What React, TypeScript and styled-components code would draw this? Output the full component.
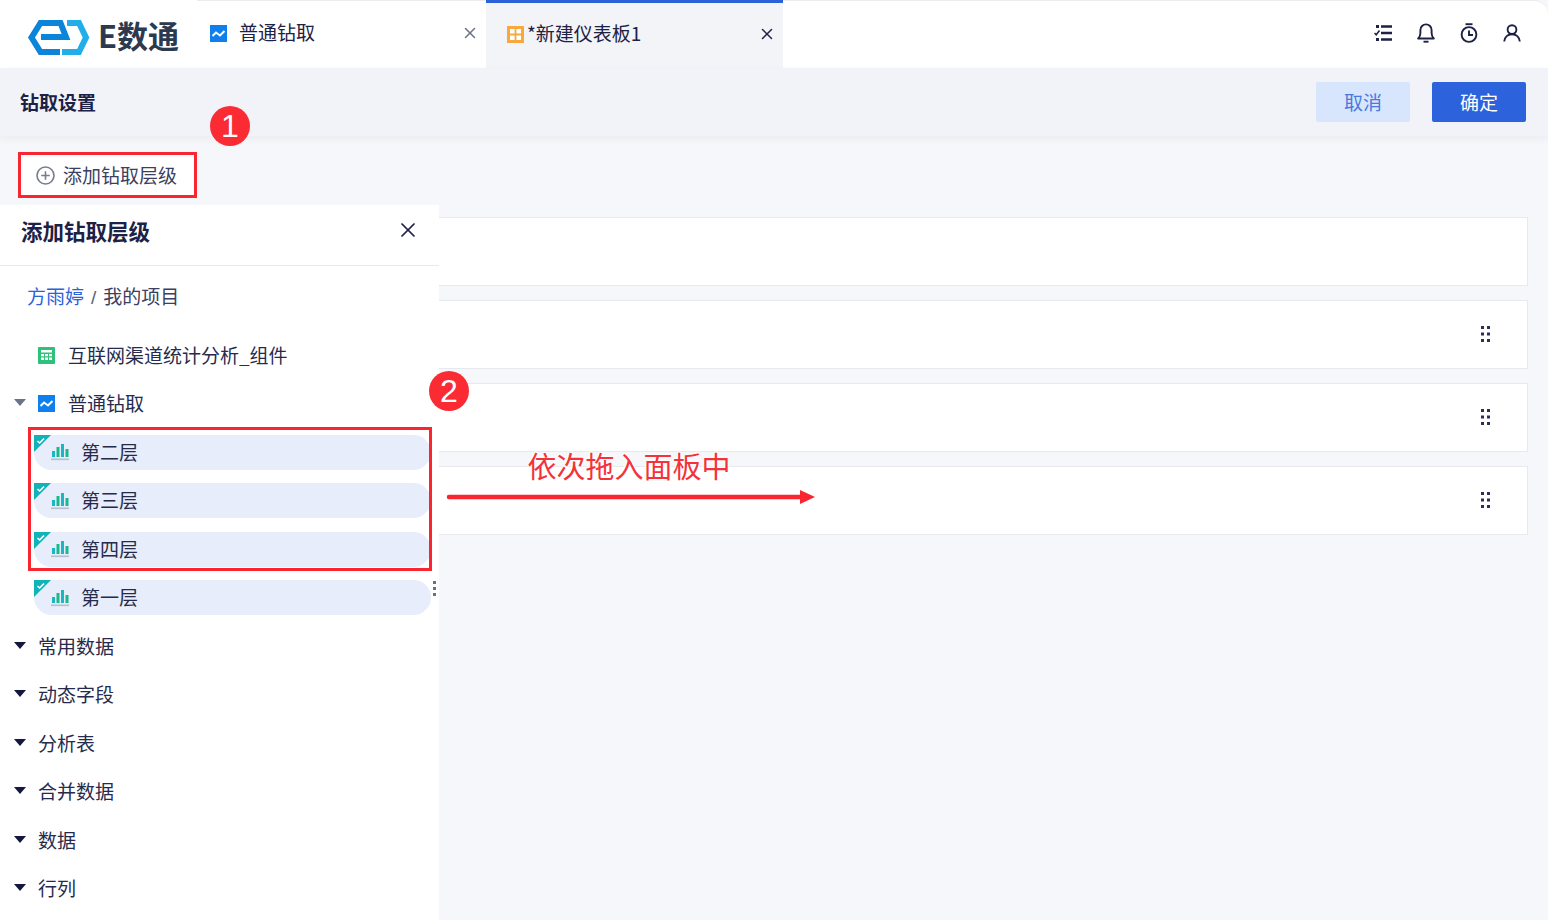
import React from "react";
import styled, { createGlobalStyle } from "styled-components";
import { X } from "lucide-react";

const Global = createGlobalStyle`
  html, body { margin: 0; padding: 0; background: #f6f7fa; }
  body { font-family: "Noto Sans CJK SC", "Liberation Sans", sans-serif; color: #1c2145; }
  * { box-sizing: border-box; }
`;

const Page = styled.div`
  position: relative;
  width: 1548px;
  height: 920px;
  overflow: hidden;
  background: #f6f7fa;
  display: flex;
  flex-direction: column;
`;

const TopBar = styled.header`
  height: 68px;
  display: flex;
  background: #fff;
  border-top: 1px solid #ececef;
  border-top-right-radius: 14px;
`;

const Brand = styled.div`
  width: 197px;
  flex: none;
  display: flex;
  align-items: center;
  padding: 7px 0 0 26px;
  margin-top: -1px;
  background: #fff;
  position: relative;
`;

const BrandName = styled.span`
  font-size: 31px;
  font-weight: 700;
  color: #2c3a50;
  margin: 0 0 6px 8px;
  white-space: nowrap;
  line-height: 34px;
`;

const Tab = styled.div<{ $active?: boolean; $width: number; $pad: number }>`
  width: ${(p) => p.$width}px;
  flex: none;
  display: flex;
  align-items: center;
  padding: 0 7px 3px ${(p) => p.$pad}px;
  font-size: 19px;
  margin-top: ${(p) => (p.$active ? "-1px" : "0")};
  background: ${(p) => (p.$active ? "#f3f4f8" : "#fff")};
  border-top: ${(p) => (p.$active ? "3px solid #2c62d8" : "none")};
`;

const TabLabel = styled.span<{ $gap: number }>`
  flex: 1;
  margin-left: ${(p) => p.$gap}px;
  padding-bottom: 3px;
  white-space: nowrap;
`;

const TabClose = styled(X)<{ $dark?: boolean }>`
  width: 18px;
  height: 18px;
  color: ${(p) => (p.$dark ? "#1c2145" : "#6d7387")};
  stroke-width: 2;
`;

const Tools = styled.div`
  margin-left: auto;
  display: flex;
  align-items: center;
  gap: 25px;
  padding: 0 27px 4px 0;
  color: #1c2145;
`;

const HeaderBar = styled.div`
  height: 68px;
  flex: none;
  background: #f1f3f8;
  box-shadow: 0 3px 8px rgba(30, 40, 80, 0.05);
  display: flex;
  align-items: center;
  padding: 0 22px 0 20px;
  position: relative;
`;

const HeaderTitle = styled.h1`
  margin: 0 auto 0 0;
  font-size: 19px;
  font-weight: 700;
  line-height: 28px;
`;

const ActionButton = styled.button<{ $primary?: boolean }>`
  width: 94px;
  height: 40px;
  border: 0;
  border-radius: 2px;
  margin-left: 22px;
  font: inherit;
  font-size: 19px;
  padding: 0 0 2px;
  color: ${(p) => (p.$primary ? "#fff" : "#4a79de")};
  background: ${(p) => (p.$primary ? "#2c62dc" : "#d7e5fd")};
`;

const Content = styled.main`
  flex: 1;
  position: relative;
  padding: 18px 20px 0 0;
`;

const AddButton = styled.div`
  margin-left: 20px;
  width: 175px;
  height: 42px;
  background: #fff;
  display: flex;
  align-items: center;
  padding-left: 16px;
  gap: 8px;
  font-size: 19px;
  color: #3b4060;
  white-space: nowrap;
`;

const AddLabel = styled.span`
  padding-bottom: 2px;
`;

const CardList = styled.div`
  margin-top: 21px;
  display: flex;
  flex-direction: column;
  gap: 14px;
`;

const Card = styled.div`
  height: 69px;
  background: #fff;
  border: 1px solid #e8e9ef;
  display: flex;
  align-items: center;
  justify-content: flex-end;
  padding: 0 37px 2px 0;
`;

const Panel = styled.aside`
  position: absolute;
  left: 0;
  top: 69px;
  width: 439px;
  height: 715px;
  background: #fff;
`;

const PanelHead = styled.div`
  height: 61px;
  border-bottom: 1px solid #e8e9ef;
  display: flex;
  align-items: center;
  justify-content: space-between;
  padding: 0 21px 0 21px;
`;

const PanelTitle = styled.h2`
  margin: 0 0 9px;
  font-size: 21.5px;
  font-weight: 700;
  line-height: 30px;
  white-space: nowrap;
`;

const PanelClose = styled(X)`
  width: 24px;
  height: 24px;
  stroke-width: 1.7;
  margin: -11px -2px 0 0;
`;

const Crumbs = styled.div`
  height: 65px;
  padding: 16px 0 0 27px;
  font-size: 19px;
  line-height: 28px;
  white-space: nowrap;
  color: #3b4060;
`;

const CrumbLink = styled.span`
  color: #2c62d8;
`;

const CrumbSep = styled.span`
  margin: 0 7px;
  color: #5a5f78;
  font-family: "Liberation Sans", sans-serif;
`;

const Row = styled.div`
  height: 48.5px;
  display: flex;
  align-items: center;
  position: relative;
  font-size: 19px;
  white-space: nowrap;
  color: #262b4d;
`;

const RowLabel = styled.span`
  padding-bottom: 2px;
`;

const Caret = styled.span<{ $muted?: boolean }>`
  width: 0;
  height: 0;
  margin-left: 14px;
  margin-right: 12px;
  border-left: 6px solid transparent;
  border-right: 6px solid transparent;
  border-top: 7px solid ${(p) => (p.$muted ? "#6d7387" : "#14183c")};
  margin-top: -2px;
`;

const FileIcon = styled.span`
  width: 17px;
  height: 17px;
  margin-right: 13px;
  display: inline-flex;
`;

const Indent = styled.span`
  width: 38px;
  flex: none;
`;

const PillRow = styled.div`
  height: 48.5px;
  padding: 6.5px 8px 7px 34px;
  font-size: 19px;
  white-space: nowrap;
  color: #262b4d;
  position: relative;
`;

const Pill = styled.div`
  position: relative;
  height: 35px;
  background: #e7edfa;
  border-radius: 0 17.5px 17.5px 17.5px;
  display: flex;
  align-items: center;
  padding-left: 17px;
  gap: 12px;
  overflow: hidden;
`;

const PillCorner = styled.svg`
  position: absolute;
  left: 0;
  top: 0;
`;

const MoreDots = styled.svg`
  position: absolute;
  right: 3px;
  top: 7px;
`;

const RedBox = styled.div<{ $x: number; $y: number; $w: number; $h: number }>`
  position: absolute;
  left: ${(p) => p.$x}px;
  top: ${(p) => p.$y}px;
  width: ${(p) => p.$w}px;
  height: ${(p) => p.$h}px;
  border: 3px solid #f9252f;
`;

const Badge = styled.div<{ $x: number; $y: number }>`
  position: absolute;
  left: ${(p) => p.$x - 20}px;
  top: ${(p) => p.$y - 20}px;
  width: 40px;
  height: 40px;
  border-radius: 50%;
  background: #fb2b33;
  color: #fff;
  font-family: "Liberation Sans", sans-serif;
  font-size: 32px;
  line-height: 40px;
  text-align: center;
`;

const Note = styled.div`
  position: absolute;
  left: 527.5px;
  top: 444px;
  font-size: 29px;
  line-height: 42px;
  color: #f5323a;
  white-space: nowrap;
  text-shadow: 0 0 3px #fff, 0 0 3px #fff, 0 0 3px #fff;
`;

const ArrowMark = styled.svg`
  position: absolute;
  left: 446px;
  top: 488px;
`;

const Logo = () => (
  <svg width="64" height="40" viewBox="26 18 64 40" fill="none" strokeWidth="6" style={{ flex: "none" }}>
    <path d="M41 37H66L60.5 23H40.5L31.5 37.5L40.5 52H60" stroke="#0a85d9" />
    <path d="M67 23H79L86 37.5L79 52H62" stroke="#23aeea" />
  </svg>
);

const ChartTabIcon = () => (
  <svg width="17" height="17" viewBox="0 0 17 17">
    <rect width="17" height="17" fill="#0f7fee" />
    <path d="M2.5 11L6 7.5L10 10.5L14.5 6" stroke="#fff" strokeWidth="2" fill="none" />
  </svg>
);

const DashIcon = () => (
  <svg width="17" height="17" viewBox="0 0 17 17" style={{ marginTop: 1 }}>
    <rect width="17" height="17" fill="#f8a83c" />
    <path d="M3 3h4.6v4.6H3zM9.4 3H14v4.6H9.4zM3 9.4h4.6V14H3zM9.4 9.4H14V14H9.4z" fill="#fff" />
  </svg>
);

const TableIcon = () => (
  <svg width="17" height="17" viewBox="0 0 17 17">
    <rect width="17" height="17" rx="1" fill="#2fc07a" />
    <path d="M3 3h11v2.5H3zM3 7h3v2.2H3zM7 7h3v2.2H7zM11 7h3v2.2h-3zM3 10.4h3v2.6H3zM7 10.4h3v2.6H7zM11 10.4h3v2.6h-3z" fill="#fff" />
  </svg>
);

const BarsIcon = () => (
  <svg width="18" height="18" viewBox="0 0 18 18" style={{ flex: "none" }}>
    <rect x="1" y="8" width="3" height="6" fill="#1bb5c4" />
    <rect x="5.5" y="4" width="3" height="10" fill="#1bb98a" />
    <rect x="10" y="1" width="3" height="13" fill="#1bb5c4" />
    <rect x="14.5" y="6" width="3" height="8" fill="#1bb98a" />
    <rect x="0" y="15.5" width="18" height="1.6" fill="#b6bdcf" />
  </svg>
);

const CheckCorner = () => (
  <PillCorner width="17" height="17" viewBox="0 0 17 17">
    <path d="M0 0H17L0 17Z" fill="#12b3b8" />
    <path d="M3.5 6L5.6 8L10 3.5" stroke="#fff" strokeWidth="1.6" fill="none" />
  </PillCorner>
);

const ListIcon = () => (
  <svg width="18" height="18" viewBox="0 0 18 18" fill="none">
    <path d="M7 2.5H18M7 9H18M7 15.5H18" stroke="#1c2145" strokeWidth="2.6" />
    <path d="M0.5 9L2.2 10.8L5.5 6.5" stroke="#1c2145" strokeWidth="1.5" />
    <path d="M2 1H5V4H2zM2 14H5V17H2z" fill="#1c2145" />
  </svg>
);

const BellIcon = () => (
  <svg width="18" height="20" viewBox="0 0 18 20" fill="none" stroke="#1c2145" strokeWidth="1.9">
    <path d="M1.2 15.5H16.8C15.2 14 14.6 12.5 14.6 10V7A5.6 5.6 0 0 0 3.4 7V10C3.4 12.5 2.8 14 1.2 15.5Z" strokeLinejoin="round" />
    <path d="M6.5 18.7H11.5" />
  </svg>
);

const TimerIcon = () => (
  <svg width="18" height="20" viewBox="0 0 18 20" fill="none" stroke="#1c2145" strokeWidth="1.9">
    <circle cx="9" cy="11.5" r="7.4" />
    <path d="M5.5 1.2H12.5" />
    <path d="M9 7.5V12H13" />
  </svg>
);

const UserIcon = () => (
  <svg width="18" height="18" viewBox="0 0 18 18" fill="none" stroke="#1c2145" strokeWidth="1.9">
    <circle cx="9" cy="5.6" r="4.4" />
    <path d="M1.2 17.5C1.7 13.3 4.7 10.2 9 10.2C13.3 10.2 16.3 13.3 16.8 17.5" />
  </svg>
);

const Grip = () => (
  <svg width="9" height="16" viewBox="0 0 9 16" fill="#2b3058">
    <path d="M0 0h3v3H0zM6 0h3v3H6zM0 6.5h3v3H0zM6 6.5h3v3H6zM0 13h3v3H0zM6 13h3v3H6z" />
  </svg>
);

const PlusCircle = () => (
  <svg width="19" height="19" viewBox="0 0 19 19" fill="none" stroke="#777c90" strokeWidth="1.6" style={{ flex: "none" }}>
    <circle cx="9.5" cy="9.5" r="8.5" />
    <path d="M5.2 9.5H13.8M9.5 5.2V13.8" />
  </svg>
);

const layers = ["第二层", "第三层", "第四层", "第一层"];
const groups = ["常用数据", "动态字段", "分析表", "合并数据", "数据", "行列"];

export default function App() {
  return (
    <Page>
      <Global />
      <TopBar>
        <Brand>
          <Logo />
          <BrandName>E数通</BrandName>
        </Brand>
        <Tab $width={289} $pad={13}>
          <ChartTabIcon />
          <TabLabel $gap={12}>普通钻取</TabLabel>
          <TabClose />
        </Tab>
        <Tab $active $width={297} $pad={21}>
          <DashIcon />
          <TabLabel $gap={3}>*新建仪表板1</TabLabel>
          <TabClose $dark />
        </Tab>
        <Tools>
          <ListIcon />
          <BellIcon />
          <TimerIcon />
          <UserIcon />
        </Tools>
      </TopBar>
      <HeaderBar>
        <HeaderTitle>钻取设置</HeaderTitle>
        <ActionButton>取消</ActionButton>
        <ActionButton $primary>确定</ActionButton>
      </HeaderBar>
      <Content>
        <AddButton>
          <PlusCircle />
          <AddLabel>添加钻取层级</AddLabel>
        </AddButton>
        <CardList>
          <Card />
          <Card><Grip /></Card>
          <Card><Grip /></Card>
          <Card><Grip /></Card>
        </CardList>
        <Panel>
          <PanelHead>
            <PanelTitle>添加钻取层级</PanelTitle>
            <PanelClose />
          </PanelHead>
          <Crumbs>
            <CrumbLink>方雨婷</CrumbLink>
            <CrumbSep>/</CrumbSep>
            我的项目
          </Crumbs>
          <Row>
            <Indent />
            <FileIcon><TableIcon /></FileIcon>
            <RowLabel>互联网渠道统计分析_组件</RowLabel>
          </Row>
          <Row>
            <Caret $muted />
            <FileIcon><ChartTabIcon /></FileIcon>
            <RowLabel>普通钻取</RowLabel>
          </Row>
          {layers.map((name, i) => (
            <PillRow key={name}>
              <Pill>
                <CheckCorner />
                <BarsIcon />
                <RowLabel>{name}</RowLabel>
              </Pill>
              {i === 3 && (
                <MoreDots width="3" height="16" viewBox="0 0 3 16" fill="#6a6f8a">
                  <path d="M0 0h3v3H0zM0 6h3v3H0zM0 12h3v3H0z" />
                </MoreDots>
              )}
            </PillRow>
          ))}
          {groups.map((name) => (
            <Row key={name}>
              <Caret />
              <RowLabel>{name}</RowLabel>
            </Row>
          ))}
        </Panel>
      </Content>

      <RedBox $x={18} $y={152} $w={179} $h={46} />
      <RedBox $x={28} $y={427} $w={404} $h={144} />
      <Badge $x={230} $y={126}>1</Badge>
      <Badge $x={449} $y={391}>2</Badge>
      <Note>依次拖入面板中</Note>
      <ArrowMark width="370" height="18" viewBox="0 0 370 18">
        <path d="M3 9H355" stroke="#f9252f" strokeWidth="4.5" strokeLinecap="round" />
        <path d="M354 2L369 9L354 16Z" fill="#f9252f" />
      </ArrowMark>
    </Page>
  );
}
